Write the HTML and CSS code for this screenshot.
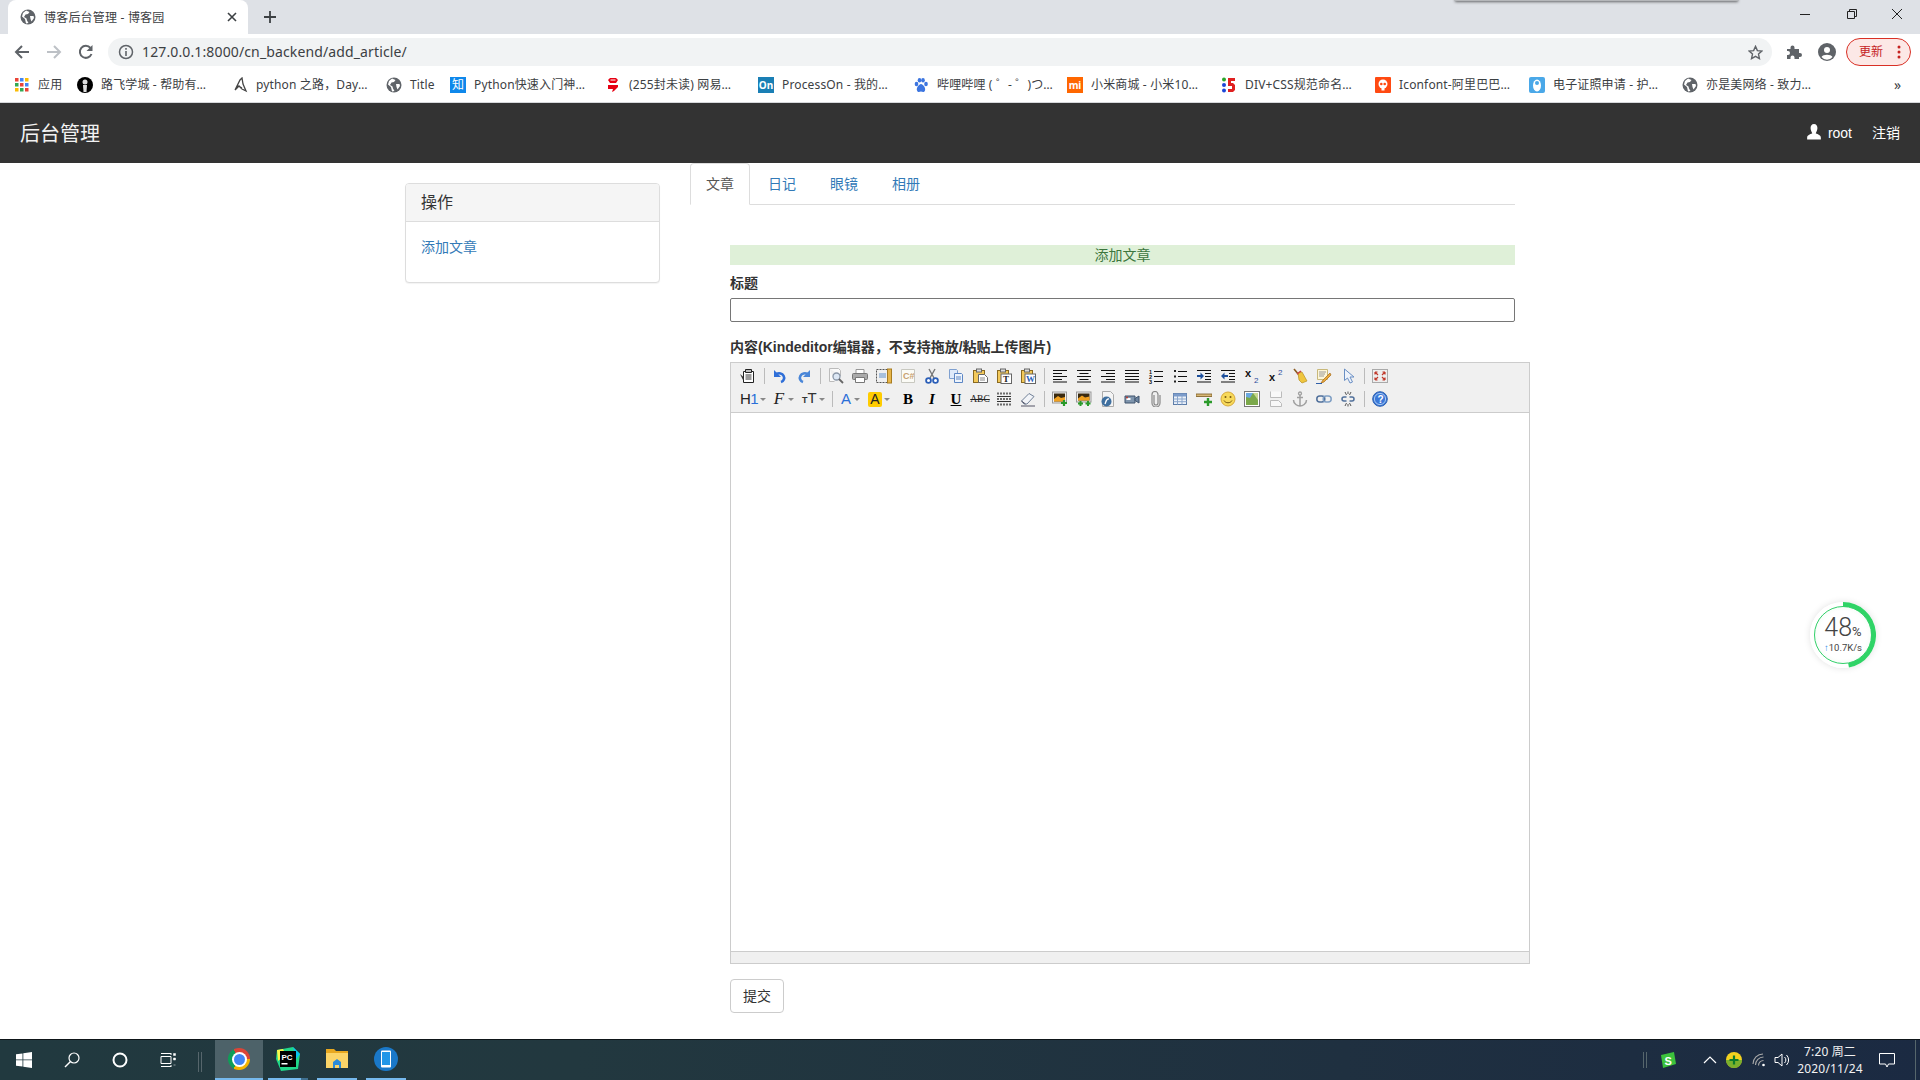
FILE: index.html
```html
<!DOCTYPE html>
<html lang="zh-CN">
<head>
<meta charset="utf-8">
<title>博客后台管理 - 博客园</title>
<link rel="stylesheet" href="styles.css">
</head>
<body>
<svg class="defs" width="0" height="0">
  <defs>
    <symbol id="globe" viewBox="0 0 16 16"><circle cx="8" cy="8" r="7.5" fill="#5f6368"/><path d="M6 1.5 9.5 3 8 5 5.5 5.5 4 8l2.500 1.500.5 2L8.500 14 6 14.500 5 10 2 7.500 3 4zM10 7h3.500l.5 2-2.500 3.500L10.500 10z" fill="#fff"/></symbol>
    <symbol id="clip" viewBox="0 0 16 16"><rect x="1.500" y="2.500" width="11" height="12" fill="#f3c95a" stroke="#8a6a20"/><rect x="4.500" y="1" width="5" height="3" fill="#ddd" stroke="#666"/></symbol>
  </defs>
</svg>

<div class="chrome">
  <div class="tabstrip">
    <div class="tab">
      <svg class="i16"><use href="#globe"/></svg>
      <span class="tab-title">博客后台管理 - 博客园</span>
      <svg class="tab-x" viewBox="0 0 10 10"><path d="M1 1l8 8M9 1l-8 8" stroke="#3c4043" stroke-width="1.600"/></svg>
    </div>
    <svg class="tab-plus" viewBox="0 0 12 12"><path d="M6 0v12M0 6h12" stroke="#3c4043" stroke-width="1.800"/></svg>
    <div class="winctl">
      <svg class="w46" viewBox="0 0 46 12"><path d="M18 6.500h10" stroke="#222" stroke-width="1"/></svg>
      <svg class="w46" viewBox="0 0 46 12"><path d="M19.500 3.500h7v7h-7zM21.500 3.500v-2h7v7h-2" fill="none" stroke="#222"/></svg>
      <svg class="w46" viewBox="0 0 46 12"><path d="M18 1l10 10M28 1L18 11" stroke="#222" stroke-width="1"/></svg>
    </div>
  </div>
  <div class="popup-edge"></div>

  <div class="toolbar">
    <svg class="nav-ic" viewBox="0 0 16 16"><path d="M15 8H2M8 2 2 8l6 6" fill="none" stroke="#5f6368" stroke-width="2"/></svg>
    <svg class="nav-ic" viewBox="0 0 16 16"><path d="M1 8h13M8 2l6 6-6 6" fill="none" stroke="#bdc1c6" stroke-width="2"/></svg>
    <svg class="nav-ic" viewBox="0 0 16 16"><path d="M13.500 10A6 6 0 1 1 12.500 4" fill="none" stroke="#5f6368" stroke-width="2"/><path d="M14.500 1v6h-6z" fill="#5f6368"/></svg>
    <div class="omnibox">
      <svg class="i16" viewBox="0 0 16 16"><circle cx="8" cy="8" r="6.500" fill="none" stroke="#5f6368" stroke-width="1.500"/><path d="M8 7v5M8 4v1.800" stroke="#5f6368" stroke-width="1.600"/></svg>
      <span class="url">127.0.0.1:8000/cn_backend/add_article/</span>
      <svg class="star" viewBox="0 0 16 16"><path d="M8 1.500l2 4.500 4.800.5-3.600 3.200 1 4.800L8 12.100 3.800 14.500l1-4.800L1.200 6.500 6 6z" fill="none" stroke="#5f6368" stroke-width="1.500"/></svg>
    </div>
    <svg class="puzzle" viewBox="0 0 16 16"><path d="M1 5h3.500V3.500a2 2 0 0 1 4 0V5H13v4h1a2 2 0 0 1 0 4h-1v2H8.500v-1.500a2 2 0 0 0-4 0V15H1v-4h1a2 2 0 0 0 0-4H1z" fill="#5f6368"/></svg>
    <svg class="avatar" viewBox="0 0 18 18"><circle cx="9" cy="9" r="9" fill="#5f6368"/><circle cx="9" cy="7" r="3" fill="#fff"/><path d="M3.500 14c1.500-3 9.500-3 11 0a7 7 0 0 1-11 0z" fill="#fff"/></svg>
    <div class="update">
      <span class="update-txt">更新</span>
      <svg class="dots" viewBox="0 0 4 14"><circle cx="2" cy="2" r="1.500"/><circle cx="2" cy="7" r="1.500"/><circle cx="2" cy="12" r="1.500"/></svg>
    </div>
  </div>

  <div class="bookmarks">
    <div class="bm w63"><svg class="i16" viewBox="0 0 16 16"><g><rect x="1" y="1" width="3.500" height="3.500" fill="#ea4335"/><rect x="6" y="1" width="3.500" height="3.500" fill="#4285f4"/><rect x="11" y="1" width="3.500" height="3.500" fill="#fbbc05"/><rect x="1" y="6" width="3.500" height="3.500" fill="#34a853"/><rect x="6" y="6" width="3.500" height="3.500" fill="#ea4335"/><rect x="11" y="6" width="3.500" height="3.500" fill="#4285f4"/><rect x="1" y="11" width="3.500" height="3.500" fill="#fbbc05"/><rect x="6" y="11" width="3.500" height="3.500" fill="#34a853"/><rect x="11" y="11" width="3.500" height="3.500" fill="#ea4335"/></g></svg><span>应用</span></div>
    <div class="bm w155"><svg class="i16" viewBox="0 0 16 16"><circle cx="8" cy="8" r="8" fill="#000"/><circle cx="8" cy="5" r="2.500" fill="#ddd"/><path d="M6 8h4l-.5 7h-3z" fill="#ddd"/></svg><span>路飞学城 - 帮助有…</span></div>
    <div class="bm w154"><svg class="i16" viewBox="0 0 16 16"><path d="M3 13 8 3l2-2 1 6 3 7-4-2-3-3-4 4M5 8l5 3" fill="none" stroke="#444" stroke-width="1.300"/></svg><span>python 之路，Day…</span></div>
    <div class="bm w64"><svg class="i16"><use href="#globe"/></svg><span>Title</span></div>
    <div class="bm w155"><span class="fav fav-zhi">知</span><span>Python快速入门神…</span></div>
    <div class="bm w153"><svg class="i16" viewBox="0 0 16 16"><path d="M5 1h6l2 2-2 3H5L3 3zM3 8h10v2l-4 4-2 1 1-3H3z" fill="#e60012"/><path d="M5.500 3h5" stroke="#fff"/></svg><span>(255封未读) 网易…</span></div>
    <div class="bm w155"><span class="fav fav-on">On</span><span>ProcessOn - 我的…</span></div>
    <div class="bm w154"><svg class="i16" viewBox="0 0 16 16"><g fill="#3c75e0"><ellipse cx="3.500" cy="7" rx="1.800" ry="2.300"/><ellipse cx="6.500" cy="3.200" rx="1.800" ry="2.300"/><ellipse cx="10" cy="3.200" rx="1.800" ry="2.300"/><ellipse cx="13" cy="7" rx="1.800" ry="2.300"/><path d="M8 7c-2 0-5 4-4 6.500s3 1 4 1 3 1.500 4-1S10 7 8 7z"/></g></svg><span>哔哩哔哩 ( ゜- ゜)つ…</span></div>
    <div class="bm w154"><span class="fav fav-mi">mi</span><span>小米商城 - 小米10…</span></div>
    <div class="bm w154"><svg class="i16" viewBox="0 0 16 16"><circle cx="3" cy="2.500" r="2" fill="#2aa52a"/><circle cx="3" cy="8" r="2" fill="#1c46d8"/><circle cx="3" cy="13.500" r="2" fill="#1c46d8"/><path d="M7 1h7v3H10v2h2l2 2v5l-2 2H7v-3h4V9H7z" fill="#e02020"/></svg><span>DIV+CSS规范命名…</span></div>
    <div class="bm w154"><svg class="i16" viewBox="0 0 16 16"><rect width="16" height="16" rx="1" fill="#ff4a12"/><circle cx="8" cy="7" r="4.500" fill="#fff"/><circle cx="6.300" cy="7" r="1.300" fill="#ff4a12"/><circle cx="9.700" cy="7" r="1.300" fill="#ff4a12"/><rect x="6.500" y="11" width="3" height="2.500" fill="#fff"/></svg><span>Iconfont-阿里巴巴…</span></div>
    <div class="bm w153"><svg class="i16" viewBox="0 0 16 16"><rect width="16" height="16" rx="2" fill="#4aa8e8"/><ellipse cx="8" cy="8.500" rx="4" ry="6" fill="#fff"/><circle cx="8" cy="6" r="2" fill="#4aa8e8"/></svg><span>电子证照申请 - 护…</span></div>
    <div class="bm w150"><svg class="i16"><use href="#globe"/></svg><span>亦是美网络 - 致力…</span></div>
    <span class="bm-more">»</span>
  </div>
</div>

<header class="navbar">
  <span class="brand">后台管理</span>
  <div class="nav-right">
    <svg class="user-ic" viewBox="0 0 14 14"><path d="M7 0c2 0 3 1.500 3 3.500S9 7 8.500 8c2 1 4.500 1.500 4.500 4v1.500H1V12c0-2.500 2.500-3 4.500-4C5 7 4 5.500 4 3.500S5 0 7 0z" fill="#fff"/></svg>
    <span class="nav-root">root</span>
    <span>注销</span>
  </div>
</header>

<main class="main">
  <aside class="panel">
    <div class="panel-head">操作</div>
    <div class="panel-body"><a class="link">添加文章</a></div>
  </aside>
  <section class="content">
    <ul class="tabs">
      <li class="t active">文章</li>
      <li class="t">日记</li>
      <li class="t">眼镜</li>
      <li class="t">相册</li>
    </ul>
    <form class="form">
      <div class="alert">添加文章</div>
      <label class="lbl">标题</label>
      <input class="title-input" type="text">
      <label class="lbl">内容(Kindeditor编辑器，不支持拖放/粘贴上传图片)</label>
      <div class="editor">
        <div class="ke-bar">
          <div class="ke-row">
            <span class="k"><svg class="ki" viewBox="0 0 16 16"><path d="M3.500 3.500h10v11h-10z" fill="#fff" stroke="#222"/><path d="M5.500 1.500h6v3h-6z" fill="#bbb" stroke="#222"/><path d="M5.500 7h6M5.500 9h6M5.500 11h6" stroke="#333"/><path d="M0 6l3.500 3v4z" fill="#333"/></svg></span>
            <span class="s"></span>
            <span class="k"><svg class="ki" viewBox="0 0 16 16"><path d="M4.500 6A5 4.500 0 1 1 9 14" fill="none" stroke="#2f6fd8" stroke-width="2.600"/><path d="M2 2v7h7z" fill="#2f6fd8"/></svg></span>
            <span class="k"><svg class="ki" viewBox="0 0 16 16"><path d="M11.500 6A5 4.500 0 1 0 7 14" fill="none" stroke="#4a86d8" stroke-width="2.600"/><path d="M14 2v7H7z" fill="#4a86d8"/></svg></span>
            <span class="s"></span>
            <span class="k"><svg class="ki" viewBox="0 0 16 16"><path d="M1.500 .5h9l2 2V8M1.500 .5v13h5" fill="#fafafa" stroke="#bbb"/><circle cx="8.500" cy="8.500" r="3.500" fill="#dde8f5" stroke="#8a97a8" stroke-width="1.300"/><path d="M11 11l4 4" stroke="#666" stroke-width="1.800"/></svg></span>
            <span class="k"><svg class="ki" viewBox="0 0 16 16"><path d="M4 1.500h8v4H4z" fill="#fff" stroke="#999"/><rect x=".5" y="5.500" width="15" height="6" rx="1" fill="#aaa" stroke="#777"/><path d="M3.500 9.500h9v5h-9z" fill="#fff" stroke="#777"/></svg></span>
            <span class="k"><svg class="ki" viewBox="0 0 16 16"><path d="M.5 1.500h11v13H.5z" fill="#f0f0f0" stroke="#555" stroke-dasharray="2 1"/><rect x="11.500" y="1" width="4" height="14" fill="#e8b64a" stroke="#a87c20"/><rect x="3" y="5" width="7" height="5" fill="#a8c0dc"/></svg></span>
            <span class="k"><svg class="ki" viewBox="0 0 16 16"><path d="M1.500 1.500h13v13h-13z" fill="#fbfbf6" stroke="#c8c8c0"/><text class="ktext-code" x="3" y="11">C#</text></svg></span>
            <span class="k"><svg class="ki" viewBox="0 0 16 16"><path d="M5 1l5 9M11 1l-5 9" stroke="#777" stroke-width="1.400"/><circle cx="4.500" cy="12.500" r="2.400" fill="#fff" stroke="#2c5fb8" stroke-width="1.800"/><circle cx="11.500" cy="12.500" r="2.400" fill="#fff" stroke="#2c5fb8" stroke-width="1.800"/></svg></span>
            <span class="k"><svg class="ki" viewBox="0 0 16 16"><path d="M1.500 1.500h7l1 1v8h-8z" fill="#dfeafa" stroke="#7fa0d0"/><path d="M6.500 5.500h7l1 1v8h-8z" fill="#eef4fc" stroke="#5c86c4"/><path d="M8 9h5M8 11h5" stroke="#5c86c4"/></svg></span>
            <span class="k"><svg class="ki" viewBox="0 0 16 16"><use href="#clip"/><path d="M6.500 6.500h6l3 3v5h-9z" fill="#fff" stroke="#666"/><path d="M8 10h5M8 12h5" stroke="#888"/></svg></span>
            <span class="k"><svg class="ki" viewBox="0 0 16 16"><use href="#clip"/><rect x="5" y="6" width="10.500" height="9.500" fill="#fff" stroke="#666"/><text class="ktext-t" x="7" y="14">T</text></svg></span>
            <span class="k"><svg class="ki" viewBox="0 0 16 16"><use href="#clip"/><rect x="5" y="6" width="10.500" height="9.500" fill="#fff" stroke="#666"/><text class="ktext-w" x="6" y="14">W</text></svg></span>
            <span class="s"></span>
            <span class="k"><svg class="ki" viewBox="0 0 16 16"><path d="M1 2.500h14M1 5.500h9M1 8.500h14M1 11.500h9M1 14h14" stroke="#111"/></svg></span>
            <span class="k"><svg class="ki" viewBox="0 0 16 16"><path d="M1 2.500h14M3.500 5.500h9M1 8.500h14M3.500 11.500h9M1 14h14" stroke="#111"/></svg></span>
            <span class="k"><svg class="ki" viewBox="0 0 16 16"><path d="M1 2.500h14M6 5.500h9M1 8.500h14M6 11.500h9M1 14h14" stroke="#111"/></svg></span>
            <span class="k"><svg class="ki" viewBox="0 0 16 16"><path d="M1 2.500h14M1 5.500h14M1 8.500h14M1 11.500h14M1 14h14" stroke="#111"/></svg></span>
            <span class="k"><svg class="ki" viewBox="0 0 16 16"><text class="ktext-n" x="1" y="5.500">1</text><text class="ktext-n" x="1" y="10.500">2</text><text class="ktext-n" x="1" y="15.500">3</text><path d="M6 3.500h9M6 8.500h9M6 13.500h9" stroke="#111"/></svg></span>
            <span class="k"><svg class="ki" viewBox="0 0 16 16"><path d="M6 3.500h9M6 8.500h9M6 13.500h9" stroke="#111"/><path d="M2 2h2v2H2zM2 7.500h2v2H2zM2 12.500h2v2H2z" fill="#222"/></svg></span>
            <span class="k"><svg class="ki" viewBox="0 0 16 16"><path d="M1 2.500h14M9 5.500h6M9 8.500h6M9 11.500h6M1 14h14" stroke="#111"/><path d="M1 7h3.500V4.500L8 8l-3.500 3.500V9H1z" fill="#1d4f9c"/></svg></span>
            <span class="k"><svg class="ki" viewBox="0 0 16 16"><path d="M1 2.500h14M9 5.500h6M9 8.500h6M9 11.500h6M1 14h14" stroke="#111"/><path d="M8 7H4.500V4.500L1 8l3.500 3.500V9H8z" fill="#1d4f9c"/></svg></span>
            <span class="k"><svg class="ki" viewBox="0 0 16 16"><text class="ktext-x" x="1" y="9">x</text><text class="ktext-sm" x="10" y="15">2</text></svg></span>
            <span class="k"><svg class="ki" viewBox="0 0 16 16"><text class="ktext-x" x="1" y="13">x</text><text class="ktext-sm" x="10" y="7">2</text></svg></span>
            <span class="k"><svg class="ki" viewBox="0 0 16 16"><path d="M2 1l5 6" stroke="#8a5a20" stroke-width="1.600"/><path d="M6 5l4-1 5 9-5 2-3-3z" fill="#efc53f" stroke="#b8901f" stroke-width=".7"/><path d="M5 6l4-3" stroke="#c44" stroke-width="1.500"/></svg></span>
            <span class="k"><svg class="ki" viewBox="0 0 16 16"><path d="M1.500 1.500h10v10h-10z" fill="#fdf6d8" stroke="#c8b87a"/><path d="M3 4h7M3 6h6M3 8h5" stroke="#999"/><path d="M14 5 7 12l-2 3 3-1 7-7z" fill="#e8a93a" stroke="#a66a1a" stroke-width=".7"/><path d="M0 15.500h6" stroke="#2f5fa8"/></svg></span>
            <span class="k"><svg class="ki" viewBox="0 0 16 16"><path d="M4.500 1v11.500l3-2.500 2.500 5 2.500-1-2.500-5h4z" fill="#eef3fb" stroke="#6a8fc4"/></svg></span>
            <span class="s"></span>
            <span class="k"><svg class="ki" viewBox="0 0 16 16"><rect x=".5" y="1.500" width="15" height="13" fill="#eee" stroke="#aaa"/><path d="M3 4l3 3M3 4v2.500M3 4h2.500M13 4l-3 3M13 4v2.500M13 4h-2.500M3 12l3-3M3 12V9.500M3 12h2.500M13 12l-3-3M13 12V9.500M13 12h-2.500" fill="none" stroke="#c0392b" stroke-width="1.200"/></svg></span>
          </div>
          <div class="ke-row">
            <span class="k kd w30"><span class="t-h1">H<em>1</em></span><i class="car"></i></span>
            <span class="k kd w30 ml2"><span class="t-f">F</span><i class="car"></i></span>
            <span class="k kd w30"><span class="t-tt"><small>T</small>T</span><i class="car"></i></span>
            <span class="s"></span>
            <span class="k kd w28"><span class="t-a">A</span><i class="car"></i></span>
            <span class="k kd w30"><span class="t-hi">A</span><i class="car"></i></span>
            <span class="k ml2"><span class="t-b">B</span></span>
            <span class="k"><span class="t-i">I</span></span>
            <span class="k"><span class="t-u">U</span></span>
            <span class="k"><span class="t-abc">ABC</span></span>
            <span class="k"><svg class="ki" viewBox="0 0 16 16"><path d="M1 5.500h14M1 10.500h14" stroke="#333"/><path d="M2 1.500v2M5 1.500v2M8 1.500v2M11 1.500v2M14 1.500v2M2 7v2M5 7v2M8 7v2M11 7v2M14 7v2M2 12.500v2M5 12.500v2M8 12.500v2M11 12.500v2M14 12.500v2" stroke="#333" stroke-width="1.400"/></svg></span>
            <span class="k"><svg class="ki" viewBox="0 0 16 16"><path d="M1.500 10 9 2.500l5 3L7 13H4z" fill="#f2f4f8" stroke="#6f7f96"/><path d="M1.500 10l4 3M1 15h14" fill="none" stroke="#556"/></svg></span>
            <span class="s"></span>
            <span class="k"><svg class="ki" viewBox="0 0 16 16"><rect x=".5" y="1" width="14" height="11" fill="#eee" stroke="#999"/><rect x="2" y="2.500" width="11" height="8" fill="#3a2a10"/><path d="M2 8l4-3 3 2 4-1v4.500H2z" fill="#f0a020"/><path d="M12 9v6M9 12h6" stroke="#2a9a2a" stroke-width="2.200"/></svg></span>
            <span class="k"><svg class="ki" viewBox="0 0 16 16"><rect x=".5" y="1" width="14.500" height="10" fill="#eee" stroke="#999"/><rect x="2" y="2.500" width="11.500" height="7" fill="#3a2a10"/><path d="M2 7.500l4-3 3 2 4.500-1v4H2z" fill="#f0a020"/><path d="M4.500 10v5M2 12.500h5M12 10v5M9.500 12.500h5" stroke="#2a9a2a" stroke-width="2"/></svg></span>
            <span class="k"><svg class="ki" viewBox="0 0 16 16"><path d="M2.500 .5h8l3 3v12h-11z" fill="#f4f4f4" stroke="#aaa"/><circle cx="6.500" cy="10.500" r="5" fill="#3f6f9f"/><path d="M9 8C6 7.500 6 11 5 13" fill="none" stroke="#fff" stroke-width="1.300"/></svg></span>
            <span class="k"><svg class="ki" viewBox="0 0 16 16"><path d="M1 5h10v7H1z" fill="#7f95ad" stroke="#3e536d"/><path d="M11 7.500l4-2.500v7l-4-2.500z" fill="#6d84a0" stroke="#3e536d"/><rect x="2.500" y="7" width="4" height="2" fill="#fff"/><circle cx="3" cy="6.500" r="1" fill="#c0392b"/></svg></span>
            <span class="k"><svg class="ki" viewBox="0 0 16 16"><path d="M6 4v8a2 2 0 0 0 4 0V3.500a3 3 0 0 0-6 0V12a4 4 0 0 0 8 0V4" fill="none" stroke="#888" stroke-width="1.200"/></svg></span>
            <span class="k"><svg class="ki" viewBox="0 0 16 16"><rect x="1.500" y="2.500" width="13" height="11" fill="#eaf0f8" stroke="#5c7ca8"/><path d="M1.500 2.500h13v3h-13z" fill="#7b9bca"/><path d="M1.500 8h13M1.500 10.700h13M5.500 5v8.500M10 5v8.500" stroke="#8aa6cc"/></svg></span>
            <span class="k"><svg class="ki" viewBox="0 0 16 16"><rect x="0" y="3" width="16" height="2.500" fill="#d8b878" stroke="#7a5a20" stroke-width=".8"/><path d="M12 7v8M8 11h8" stroke="#2a9a2a" stroke-width="2.400"/></svg></span>
            <span class="k"><svg class="ki" viewBox="0 0 16 16"><circle cx="8" cy="8" r="7" fill="#f7d95a" stroke="#d8a93a"/><circle cx="5.500" cy="6" r="1" fill="#7a5a10"/><circle cx="10.500" cy="6" r="1" fill="#7a5a10"/><path d="M4 9.500c1.500 3 6.500 3 8 0" fill="none" stroke="#7a5a10"/></svg></span>
            <span class="k"><svg class="ki" viewBox="0 0 16 16"><rect x=".5" y=".5" width="15" height="15" fill="#fff" stroke="#777"/><rect x="2" y="2" width="12" height="12" fill="#7ba84a"/><path d="M2 2h7L6 7 2 6z" fill="#6aa8e0"/><path d="M9 2h5v7z" fill="#c8d890"/></svg></span>
            <span class="k"><svg class="ki" viewBox="0 0 16 16"><path d="M2.500 .5v6h11v-6M2.500 9.500h8l3 3v3h-11z" fill="#f8f8f8" stroke="#bbb"/></svg></span>
            <span class="k"><svg class="ki" viewBox="0 0 16 16"><circle cx="8" cy="2.500" r="1.500" fill="none" stroke="#a0a0a0" stroke-width="1.300"/><path d="M8 4v11M5 6.500h6M1.500 9c0 4 4 6 6.500 6s6.500-2 6.500-6" fill="none" stroke="#a0a0a0" stroke-width="1.500"/></svg></span>
            <span class="k"><svg class="ki" viewBox="0 0 16 16"><rect x=".8" y="5" width="8" height="6" rx="3" fill="none" stroke="#4f6f9a" stroke-width="1.500"/><rect x="7.200" y="5" width="8" height="6" rx="3" fill="none" stroke="#7f9fc4" stroke-width="1.500"/></svg></span>
            <span class="k"><svg class="ki" viewBox="0 0 16 16"><path d="M6.500 6H4a2 2 0 0 0 0 4h2.500M9.500 6H12a2 2 0 0 1 0 4H9.500" fill="none" stroke="#4f6f9a" stroke-width="1.500"/><path d="M5 1l1.500 3M11 1 9.500 4M5 15l1.500-3M11 15l-1.500-3M8 .5V3M8 13v2.500" stroke="#555"/></svg></span>
            <span class="s"></span>
            <span class="k"><svg class="ki" viewBox="0 0 16 16"><circle cx="8" cy="8" r="7.300" fill="#3b78d8" stroke="#2c5fae"/><circle cx="8" cy="8" r="5.600" fill="none" stroke="#a8c8f0"/><text class="ktext-q" x="5.500" y="12">?</text></svg></span>
          </div>
        </div>
        <div class="ke-body"></div>
        <div class="ke-status"></div>
      </div>
      <button class="submit" type="button">提交</button>
    </form>
  </section>
</main>

<footer class="taskbar">
  <span class="tb"><svg class="tb-ic" viewBox="0 0 16 16"><path d="M0 2.300 6.500 1.400V7.500H0zM7.300 1.300 16 0v7.500H7.300zM0 8.300h6.500v6.300L0 13.700zM7.300 8.300H16V16L7.300 14.700z" fill="#fff"/></svg></span>
  <span class="tb"><svg class="tb-ic" viewBox="0 0 16 16"><circle cx="10" cy="6" r="5" fill="none" stroke="#fff" stroke-width="1.200"/><path d="M6.500 9.500 1 15" stroke="#fff" stroke-width="1.400"/></svg></span>
  <span class="tb"><svg class="tb-ic" viewBox="0 0 16 16"><circle cx="8" cy="8" r="6.500" fill="none" stroke="#fff" stroke-width="2"/></svg></span>
  <span class="tb"><svg class="tb-ic" viewBox="0 0 16 16"><path d="M1 4.500h10v7H1zM1 1.500h10M1 14.500h10M11 1v2M11 13v2" fill="none" stroke="#fff"/><path d="M13.500 1.500h2v2h-2zM13.500 6h2v2h-2zM13.500 13h2" fill="#fff" stroke="#fff" stroke-width=".5"/></svg></span>
  <span class="tb-sep"></span>
  <span class="app on w48"><span class="chrome-ic"><span class="chrome-in"></span></span></span>
  <span class="app app-py"><svg class="app-ic" viewBox="0 0 24 24"><path d="M1 3 17 0l7 7-2 15-17 2L0 12z" fill="#21d789"/><path d="M17 0l7 7-4 5z" fill="#07c3f2"/><path d="M1 3l6-1 3 6-8 6z" fill="#fcf84a"/><rect x="4" y="4" width="16" height="16" fill="#000"/><text class="py-t" x="5.500" y="12.500">PC</text><rect x="5.500" y="16" width="6" height="1.500" fill="#fff"/></svg></span>
  <span class="app w40"><svg class="app-ic" viewBox="0 0 24 24"><path d="M1 2h8l2 2h12v3H1z" fill="#e8a820"/><path d="M1 6h22v15H1z" fill="#fbd468"/><path d="M8 21v-6l4-3 4 3v6h-2v-3h-4v3z" fill="#2a8ad8"/></svg></span>
  <span class="app w40 ml9"><svg class="app-ic" viewBox="0 0 24 24"><circle cx="12" cy="12" r="12" fill="#1a78c8"/><rect x="7" y="3.500" width="10" height="17" rx="1" fill="#fff"/><rect x="8" y="5" width="8" height="13" fill="#2196e8"/></svg></span>
  <div class="tray">
    <span class="tb-sep tray-sep"></span>
    <svg class="tray-s" viewBox="0 0 16 16"><path d="M1 3 14 0l2 12-13 4z" fill="#3cc23c"/><text class="tray-st" x="4.500" y="12.500">S</text></svg>
    <svg class="tray-chev" viewBox="0 0 14 8"><path d="M1 7l6-6 6 6" fill="none" stroke="#fff" stroke-width="1.200"/></svg>
    <svg class="tray-360" viewBox="0 0 16 16"><circle cx="8" cy="8" r="8" fill="#f3d21f"/><path d="M0 8a8 8 0 0 0 16 0z" fill="#5da82f" opacity=".8"/><path d="M8 3.500v9M3.500 8h9" stroke="#0d7a2a" stroke-width="2.200"/></svg>
    <svg class="tray-wifi" viewBox="0 0 14 14"><path d="M1 11a10 10 0 0 1 10-10M3.500 12a8 8 0 0 1 8-8M6.500 12.500a5 5 0 0 1 5-5" fill="none" stroke="#aaa" stroke-width="1.100"/><circle cx="11.500" cy="12" r="1.300" fill="#fff"/></svg>
    <svg class="tray-vol" viewBox="0 0 16 16"><path d="M1 5.500h3L8 2v12l-4-3.500H1z" fill="none" stroke="#fff"/><path d="M10.500 5a4 4 0 0 1 0 6M12.500 3a7 7 0 0 1 0 10" fill="none" stroke="#fff"/></svg>
    <div class="clock"><span>7:20 周二</span><span>2020/11/24</span></div>
    <svg class="tray-note" viewBox="0 0 16 15"><path d="M.5.500h15v10.500H9.500L8 14l-1.500-3H.5z" fill="none" stroke="#fff"/></svg>
    <span class="show-desk"></span>
  </div>
</footer>

<div class="speed">
  <svg class="speed-ring" viewBox="0 0 66 66">
    <circle cx="33" cy="33" r="33" fill="#fff"/>
    <path d="M33 2.500A30.500 30.500 0 0 1 38.500 63" fill="none" stroke="#2fd466" stroke-width="5"/>
  </svg>
  <div class="speed-in">
    <div class="speed-num">48<small>%</small></div>
    <div class="speed-rate"><b>↑</b>10.7K/s</div>
  </div>
</div>
</body>
</html>
```

FILE: styles.css
```css
* { box-sizing: border-box; }
html, body { margin: 0; height: 100%; }
body {
  height: 100vh;
  overflow: hidden;
  display: flex;
  flex-direction: column;
  font-family: "Liberation Sans", "Noto Sans CJK SC", sans-serif;
  font-size: 14px;
  line-height: 20px;
  color: #333;
  background: #fff;
}
.defs { position: absolute; }
.i16 { width: 16px; height: 16px; flex: none; }

/* browser chrome */
.chrome { position: relative; flex: none; font-family: "Noto Sans", "Noto Sans CJK SC", sans-serif; color: #3c4043; }
.tabstrip { height: 34px; background: #dee1e6; display: flex; align-items: center; padding-left: 8px; }
.tab {
  width: 240px; height: 34px; background: #fff; border-radius: 8px 8px 0 0;
  display: flex; align-items: center; padding: 0 12px; font-size: 12px; align-self: flex-end;
}
.tab-title { margin: 2px 0 0 8px; flex: 1; letter-spacing: .2px; }
.tab-x { width: 10px; height: 10px; margin-right: -1px; }
.tab-plus { width: 12px; height: 12px; margin-left: 16px; }
.winctl { margin-left: auto; display: flex; margin-right: 0; margin-top: -6px; }
.w46 { width: 46px; height: 12px; }
.popup-edge { position: absolute; left: 1455px; top: -4px; width: 283px; height: 5px; background: #b5b7ba; box-shadow: 0 1px 3px rgba(0,0,0,.55); }

.toolbar { height: 32px; background: #fff; display: flex; align-items: flex-start; padding: 4px 9px 0 14px; }
.nav-ic { width: 16px; height: 16px; margin: 6px 16px 0 0; flex: none; }
.omnibox {
  width: 1664px; height: 28px; background: #f1f3f4; border-radius: 14px; margin-left: -2px;
  display: flex; align-items: center; padding: 0 9px 0 10px; flex: none;
}
.url { margin-left: 8px; font-size: 14px; color: #3c4043; flex: 1; letter-spacing: .13px; }
.star { width: 15px; height: 15px; }
.puzzle { width: 16px; height: 16px; margin: 6px 0 0 14px; flex: none; }
.avatar { width: 18px; height: 18px; margin: 5px 0 0 16px; flex: none; }
.update {
  width: 65px; height: 28px; margin-left: 10px; flex: none; border: 1px solid #d93025; border-radius: 14px;
  background: #fce8e6; display: flex; align-items: center; padding: 0 9px 0 12px; justify-content: space-between;
  color: #c5221f; font-size: 12px;
}
.dots { width: 4px; height: 14px; fill: #c5221f; }

.bookmarks { height: 37px; background: #fff; border-bottom: 1px solid #d6d8db; display: flex; align-items: center; padding: 2px 0 0 14px; font-size: 12px; letter-spacing: .15px; }
.bm { display: flex; align-items: center; gap: 8px; flex: none; white-space: nowrap; overflow: hidden; }
.w63 { width: 63px; } .w64 { width: 64px; } .w150 { width: 150px; }
.w153 { width: 153px; } .w154 { width: 154px; } .w155 { width: 155px; }
.fav { width: 16px; height: 16px; flex: none; display: flex; align-items: center; justify-content: center; color: #fff; line-height: 16px; letter-spacing: 0; }
.fav-zhi { background: #0f88eb; font-size: 12px; }
.fav-on { background: #1a7fb5; font-size: 10px; font-weight: 700; }
.fav-mi { background: #ff6700; font-size: 10px; font-weight: 700; }
.bm-more { margin-left: 62px; font-size: 14px; }

/* navbar */
.navbar { flex: none; height: 60px; background: #333; color: #fff; display: flex; align-items: center; padding: 0 20px 0 20px; }
.brand { font-size: 20px; color: #f2f2f2; margin-top: 2px; }
.nav-right { margin-left: auto; display: flex; align-items: center; }
.user-ic { width: 16px; height: 16px; margin-right: 6px; margin-top: -2px; }
.nav-root { margin-right: 20px; }

/* main */
.main { flex: 1; min-height: 0; display: flex; align-items: flex-start; padding-left: 405px; }
.panel { width: 255px; margin-top: 20px; border: 1px solid #ddd; border-radius: 4px; box-shadow: 0 1px 1px rgba(0,0,0,.05); background: #fff; }
.panel-head { height: 38px; padding: 10px 15px; background: #f5f5f5; border-bottom: 1px solid #ddd; font-size: 16px; line-height: 18px; border-radius: 3px 3px 0 0; }
.panel-body { padding: 15px 15px 25px; }
.link { color: #337ab7; }
.content { width: 825px; margin-left: 30px; }
.tabs { list-style: none; margin: 0; padding: 0; height: 42px; display: flex; border-bottom: 1px solid #ddd; }
.t { height: 42px; padding: 10px 15px; margin-right: 2px; color: #337ab7; border: 1px solid transparent; border-radius: 4px 4px 0 0; }
.t.active { color: #555; background: #fff; border-color: #ddd #ddd #fff; }
.form { padding: 40px 0 0 40px; }
.alert { height: 20px; background: #dff0d8; color: #3c763d; text-align: center; margin-bottom: 8px; }
.lbl { display: block; font-weight: 700; margin-bottom: 5px; height: 20px; }
.title-input { display: block; width: 785px; height: 24px; border: 1px solid #767676; border-radius: 2px; margin: 0 0 15px; padding: 1px 2px; background: #fff; }

/* editor */
.editor { width: 800px; height: 602px; border: 1px solid #ccc; display: flex; flex-direction: column; }
.ke-bar { height: 50px; background: #f0f0f0; border-bottom: 1px solid #ccc; padding: 1px 0 0 5px; flex: none; }
.ke-row { height: 23.500px; display: flex; align-items: center; }
.k { width: 24px; height: 24px; flex: none; display: flex; align-items: center; justify-content: center; }
.ki { width: 16px; height: 16px; }
.s { width: 8px; height: 16px; flex: none; position: relative; background: linear-gradient(#bbb,#bbb) center / 1px 100% no-repeat; }
.kd { justify-content: flex-start; padding-left: 4px; gap: 2px; }
.w30 { width: 30px; } .w28 { width: 28px; }
.ml2 { margin-left: 2px; }
.car { width: 0; height: 0; border: 3px solid transparent; border-top: 3px solid #888; border-bottom: 0; flex: none; }
.t-h1 { font-size: 15px; color: #222; line-height: 16px; letter-spacing: -.5px; }
.t-h1 em { color: #2a6fd8; font-style: normal; }
.t-f { font-family: "Liberation Serif", serif; font-style: italic; font-size: 17px; color: #222; width: 14px; text-align: center; line-height: 16px; }
.t-tt { font-size: 15px; color: #333; line-height: 16px; }
.t-tt small { font-size: 9px; font-weight: 700; }
.t-a { font-size: 15px; color: #2a6fd8; width: 12px; text-align: center; line-height: 16px; }
.t-hi { font-size: 14px; color: #222; background: #ffcc00; border-radius: 2px; width: 14px; height: 15px; text-align: center; line-height: 15px; }
.t-b, .t-i, .t-u { font-family: "Liberation Serif", serif; font-weight: 700; font-size: 15px; color: #000; line-height: 16px; }
.t-i { font-style: italic; }
.t-u { text-decoration: underline; }
.t-abc { font-family: "Liberation Serif", serif; font-size: 9.500px; color: #222; text-decoration: line-through; line-height: 16px; }
.ktext-code { font: 700 9px "Liberation Sans", sans-serif; fill: #c8a070; }
.ktext-t { font: 700 9px "Liberation Serif", serif; fill: #222; }
.ktext-w { font: 700 9px "Liberation Serif", serif; fill: #2a5fb8; }
.ktext-n { font: 700 5.500px "Liberation Sans", sans-serif; fill: #111; }
.ktext-x { font: 700 11px "Liberation Sans", sans-serif; fill: #111; }
.ktext-sm { font: 8px "Liberation Sans", sans-serif; fill: #2a4f9c; }
.ktext-q { font: 700 10px "Liberation Sans", sans-serif; fill: #fff; }
.ke-body { flex: 1; background: #fff; }
.ke-status { height: 12px; flex: none; background: #f0f0f0; border-top: 1px solid #ccc; }
.submit {
  display: block; width: 54px; height: 34px; margin-top: 15px; padding: 6px 12px; background: #fff;
  border: 1px solid #ccc; border-radius: 4px; color: #333; font: 14px/20px "Liberation Sans", "Noto Sans CJK SC", sans-serif;
}

/* taskbar */
.taskbar {
  flex: none; height: 41px; border-top: 1px solid #0e1518; display: flex; align-items: stretch; color: #fff;
  background: linear-gradient(90deg, #21393f 0%, #22383f 30%, #1f3040 70%, #1b2a42 100%);
}
.tb { width: 48px; display: flex; align-items: center; justify-content: center; flex: none; }
.tb-ic { width: 16px; height: 16px; }
.tb-sep { width: 4px; margin: 12px 13px 8px 6px; border-left: 1px solid #56666c; border-right: 1px solid #56666c; flex: none; }
.app { display: flex; align-items: center; justify-content: center; flex: none; border-bottom: 2px solid #76b9ed; }
.app.on { background: #4d6269; }
.w48 { width: 48px; } .w40 { width: 40px; }
.ml9 { margin-left: 9px; }
.app-py { width: 40px; margin: 0 9px 0 5px; border-image: linear-gradient(90deg, #76b9ed 80%, #3f6f8f 80%) 1; }
.app-ic { width: 24px; height: 24px; }
.py-t { font: 700 8px "Liberation Sans", sans-serif; fill: #fff; }
.chrome-ic {
  width: 22px; height: 22px; border-radius: 50%; display: flex; align-items: center; justify-content: center;
  background: conic-gradient(from 90deg, #f4b400 0 120deg, #0f9d58 120deg 240deg, #db4437 240deg 360deg);
}
.chrome-in { width: 11px; height: 11px; border-radius: 50%; background: #4285f4; box-shadow: 0 0 0 2px #fff; }
.tray { margin-left: auto; display: flex; align-items: center; }
.tray-sep { height: 16px; margin: 0 13px 0 0; }
.tray-s { width: 16px; height: 16px; margin-right: 27px; }
.tray-st { font: 700 11px "Liberation Sans", sans-serif; fill: #fff; }
.tray-chev { width: 14px; height: 8px; margin-right: 9px; }
.tray-360 { width: 16px; height: 16px; margin-right: 10px; }
.tray-wifi { width: 14px; height: 14px; margin-right: 8px; }
.tray-vol { width: 16px; height: 16px; margin-right: 4px; }
.clock { width: 72px; display: flex; flex-direction: column; align-items: center; font: 12px/17px "Noto Sans", "Noto Sans CJK SC", sans-serif; color: #f2f2f2; margin-right: 13px; letter-spacing: .15px; }
.tray-note { width: 16px; height: 15px; margin-right: 20px; }
.show-desk { width: 5px; height: 100%; border-left: 1px solid #56666c; }

/* floating speed widget */
.speed { position: absolute; left: 1810px; top: 602px; width: 66px; height: 66px; border-radius: 50%; box-shadow: 0 0 7px rgba(0,0,0,.12); }
.speed-ring { width: 66px; height: 66px; display: block; }
.speed-in {
  position: absolute; left: 4px; top: 4px; width: 58px; height: 58px; border-radius: 50%;
  border: 1px solid #33d06a; background: radial-gradient(circle, #fff 60%, #e6f8ea 100%);
  text-align: center; font-family: Roboto, sans-serif; color: #444;
}
.speed-num { height: 24px; font-size: 25px; font-weight: 300; line-height: 24px; margin-top: 9px; }
.speed-num small { font-size: 13px; font-weight: 400; line-height: 0; }
.speed-rate { height: 12px; font-size: 9.500px; line-height: 12px; margin-top: 2px; color: #444; }
.speed-rate b { color: #2a8ae8; font-weight: 700; line-height: 0; }
```
